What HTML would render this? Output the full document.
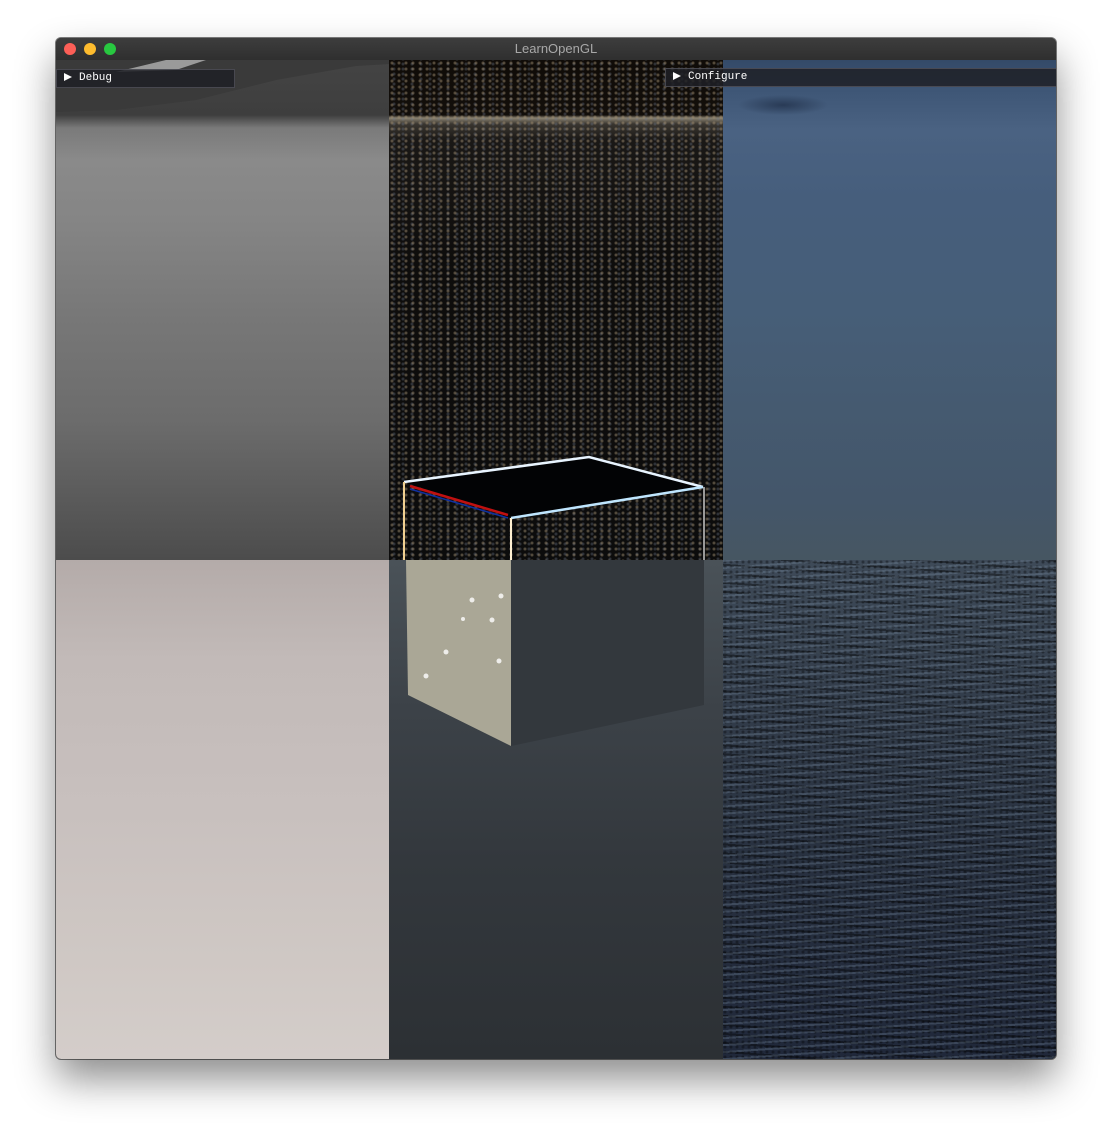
<!DOCTYPE html>
<html><head><meta charset="utf-8"><style>
html,body{margin:0;padding:0;background:#fff;width:1112px;height:1134px;overflow:hidden;font-family:"Liberation Sans",sans-serif}
.win{position:absolute;left:56px;top:38px;width:1000px;height:1021px;border-radius:5px;overflow:hidden;box-shadow:0 20px 40px rgba(0,0,0,.45),0 0 0 1px rgba(0,0,0,.5);background:#222}
.tb{position:absolute;left:0;top:0;width:1000px;height:22px;background:linear-gradient(#3d3d3d,#2f2f2f);border-bottom:1px solid #111;color:#a8a8a8;font-size:13px;text-align:center;line-height:22px}
.dot{position:absolute;top:5px;width:12px;height:12px;border-radius:50%}
.p{position:absolute;width:334px;height:500px}
.lbl{position:absolute;height:17px;background:rgba(30,32,38,.85);border:1px solid rgba(110,110,120,.5);color:#fff;font-family:"Liberation Mono",monospace;font-size:11px;line-height:17px}
.lbl b{display:inline-block;width:0;height:0;border-left:8px solid #fff;border-top:4.5px solid transparent;border-bottom:4.5px solid transparent;margin:0 7px 0 7px;vertical-align:-1px}
</style></head><body>
<div class="win">
 <div class="tb">LearnOpenGL
  <div class="dot" style="left:8px;background:#fd5f57"></div>
  <div class="dot" style="left:28px;background:#febc2e"></div>
  <div class="dot" style="left:48px;background:#28c840"></div>
 </div>
 <!-- top left -->
 <div class="p" style="left:0;top:22px;height:500px;background:linear-gradient(#444 0,#3e3e3e 55px,#7a7a7a 68px,#8a8a8a 100px,#858585 160px,#777 260px,#6c6c6c 360px,#5a5a5a 440px,#4c4c4c 500px)"></div>
 <svg style="position:absolute;left:0;top:22px" width="334" height="70"><polygon points="0,0 334,0 334,4 300,6 220,20 140,40 60,50 0,52" fill="#3a3a3a"/><polygon points="110,0 150,0 120,10 60,12" fill="#9a9a9a"/></svg>
 <!-- top middle -->
 <div class="p" style="left:333px;top:22px;height:500px;background:
   radial-gradient(circle at 3px 3px,rgba(170,150,120,.45) 1px,transparent 2px) 0 0/7px 6px,
   radial-gradient(circle at 2px 2px,rgba(110,120,140,.35) 1px,transparent 2px) 3px 2px/9px 5px,
   linear-gradient(#100c08 0,#120e0a 55px,#8a8270 58px,#3a3630 64px,#1a1816 80px,#0e0d0c 200px,#0c0c0c 500px)"></div>
 <svg style="position:absolute;left:333px;top:22px" width="334" height="500" viewBox="389 60 334 500">
  <polygon points="404,482 589,457 703,487 511,518" fill="#020305"/>
  <polyline points="404,482 589,457 703,487" stroke="#e8f4ff" stroke-width="2.5" fill="none"/>
  <polyline points="511,518 703,487" stroke="#bfe6ff" stroke-width="2.5" fill="none"/>
  <line x1="410" y1="486" x2="508" y2="515" stroke="#c01010" stroke-width="2.5"/>
  <line x1="410" y1="489" x2="508" y2="518" stroke="#1030a0" stroke-width="1.5"/>
  <line x1="404" y1="482" x2="404" y2="560" stroke="#f0d090" stroke-width="2"/>
  <line x1="511" y1="518" x2="511" y2="560" stroke="#fff0d0" stroke-width="2"/>
  <line x1="704" y1="487" x2="704" y2="560" stroke="#c8c8c8" stroke-width="1.5"/>
 </svg>
 <!-- top right -->
 <div class="p" style="left:667px;top:22px;height:500px;background:
   radial-gradient(ellipse 45px 10px at 60px 45px,rgba(30,45,70,.7),transparent),
   linear-gradient(#344a68 0,#3e5676 30px,#4a6282 70px,#465e7c 140px,#465e78 250px,#455a70 350px,#44566a 440px,#465662 500px)"></div>
 <!-- bottom left -->
 <div class="p" style="left:0;top:522px;height:499px;background:linear-gradient(#b4aba9 0,#c2bab8 100px,#c8c0be 250px,#cfc8c4 400px,#d4cdca 499px)"></div>
 <!-- bottom middle -->
 <div class="p" style="left:333px;top:522px;height:499px;background:linear-gradient(#4a5258 0,#3c4248 150px,#33383d 300px,#2c3034 499px)"></div>
 <svg style="position:absolute;left:333px;top:522px" width="334" height="499" viewBox="389 560 334 499">
  <polygon points="406,560 511,560 511,746 408,695" fill="#aaa796"/>
  <polygon points="511,560 704,560 704,705 511,746" fill="#33383d"/>
  <g fill="#fff" opacity=".8"><circle cx="472" cy="600" r="2.5"/><circle cx="501" cy="596" r="2.5"/><circle cx="492" cy="620" r="2.5"/><circle cx="463" cy="619" r="2"/><circle cx="446" cy="652" r="2.5"/><circle cx="499" cy="661" r="2.5"/><circle cx="426" cy="676" r="2.5"/></g>
 </svg>
 <!-- bottom right -->
 <div class="p" style="left:667px;top:522px;height:499px;background:
   repeating-linear-gradient(176deg,rgba(150,175,200,.22) 0 2px,transparent 2px 7px),
   repeating-linear-gradient(184deg,rgba(0,0,0,.4) 0 2px,transparent 2px 9px),
   radial-gradient(circle at 2px 2px,rgba(0,0,0,.35) 1px,transparent 2px) 0 0/6px 5px,
   linear-gradient(#3e4a58 0,#323c4a 150px,#283140 300px,#20283a 499px)"></div>
 <div class="lbl" style="left:0;top:31px;width:177px"><b></b>Debug</div>
 <div class="lbl" style="left:609px;top:30px;width:395px"><b></b>Configure</div>
</div>
</body></html>
